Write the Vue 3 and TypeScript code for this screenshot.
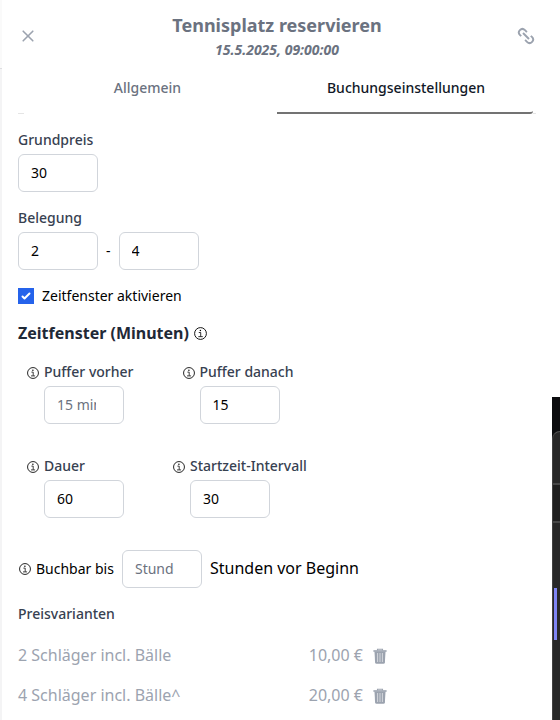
<script setup lang="ts">
import { ref } from 'vue'

interface Variant {
  name: string
  price: string
}

const basePrice = ref<number | string>(30)
const minPlayers = ref<number | string>(2)
const maxPlayers = ref<number | string>(4)
const slotsEnabled = ref(true)
const bufferBefore = ref<number | string>('')
const bufferAfter = ref<number | string>(15)
const duration = ref<number | string>(60)
const interval = ref<number | string>(30)
const bookableUntil = ref<number | string>('')

const variants = ref<Variant[]>([
  { name: '2 Schläger incl. Bälle', price: '10,00 €' },
  { name: '4 Schläger incl. Bälle^', price: '20,00 €' },
])

function removeVariant(index: number) {
  variants.value.splice(index, 1)
}
</script>

<template>
  <div class="screen">
    <svg width="0" height="0" class="sprites">
      <symbol id="info" viewBox="0 0 12 12">
        <circle cx="6" cy="6" r="5.45" fill="none" stroke="currentColor" stroke-width="0.85" />
        <circle cx="5.9" cy="3.3" r="0.7" fill="currentColor" />
        <path d="M4.4 5.1H6.2V8.7M4 8.9H8.1" fill="none" stroke="currentColor" stroke-width="0.75" />
      </symbol>
      <symbol id="trash" viewBox="0 0 14 16">
        <path d="M4.5 2.6V1.2H9.5V2.6" fill="none" stroke="currentColor" stroke-width="1.1" />
        <path d="M0.4 2.2H13.6V3.8H0.4Z" fill="currentColor" />
        <path d="M1.5 3.6H12.5L11.9 14.6Q11.8 15.8 10.6 15.8H3.4Q2.2 15.8 2.1 14.6Z" fill="currentColor" />
        <path d="M4.6 5V14M7 5V14M9.4 5V14" stroke="#fff" stroke-opacity="0.6" stroke-width="0.95" />
      </symbol>
    </svg>

    <div class="edge"><div class="edge-top"></div></div>

    <main class="panel">
      <header class="header">
        <button class="icon-btn" aria-label="Schließen">
          <svg width="20" height="20" viewBox="0 0 20 20">
            <path d="M5.2 5.2L14.8 14.8M14.8 5.2L5.2 14.8" fill="none" stroke="currentColor" stroke-width="1.6" stroke-linecap="round" />
          </svg>
        </button>
        <div class="titles">
          <h1>Tennisplatz reservieren</h1>
          <p>15.5.2025, 09:00:00</p>
        </div>
        <button class="icon-btn" aria-label="Link">
          <svg width="20" height="20" viewBox="0 0 20 20" fill="none" stroke="currentColor" stroke-width="1.9">
            <path d="M5.2 10.2L4.1 9.1C2.5 7.5 2.5 5.5 3.9 4.1C5.4 2.6 7.5 2.7 9 4.2L10.9 6.1" />
            <path d="M7 7L13 13" />
            <path d="M9.1 13.9L11 15.8C12.5 17.3 14.6 17.4 16.1 15.9C17.5 14.5 17.5 12.5 15.9 10.9L14.8 9.8" />
          </svg>
        </button>
      </header>

      <nav class="tabs">
        <button class="tab">Allgemein</button>
        <button class="tab active">Buchungseinstellungen</button>
      </nav>
      <div class="tab-ends"><i></i><i></i></div>

      <form class="form" @submit.prevent>
        <div class="field">
          <label>Grundpreis</label>
          <input v-model="basePrice" type="number" />
        </div>
        <div class="field occupancy">
          <label>Belegung</label>
          <div class="range">
            <input v-model="minPlayers" type="number" />
            <span>-</span>
            <input v-model="maxPlayers" type="number" />
          </div>
        </div>

        <label class="check">
          <input v-model="slotsEnabled" type="checkbox" />
          <span class="box">
            <svg v-if="slotsEnabled" width="16" height="16" viewBox="0 0 16 16">
              <path d="M12.207 4.793a1 1 0 0 1 0 1.414l-5 5a1 1 0 0 1-1.414 0l-2-2a1 1 0 0 1 1.414-1.414L6.5 9.086l4.293-4.293a1 1 0 0 1 1.414 0z" fill="#fff" />
            </svg>
          </span>
          Zeitfenster aktivieren
        </label>

        <h2>Zeitfenster (Minuten) <svg class="info-lg"><use href="#info" /></svg></h2>

        <div class="pair buffers">
          <div class="cell">
            <svg class="info"><use href="#info" /></svg>
            <div class="field">
              <label>Puffer vorher</label>
              <input v-model="bufferBefore" type="number" placeholder="15 min" />
            </div>
          </div>
          <div class="cell">
            <svg class="info"><use href="#info" /></svg>
            <div class="field">
              <label>Puffer danach</label>
              <input v-model="bufferAfter" type="number" />
            </div>
          </div>
        </div>

        <div class="pair timing">
          <div class="cell">
            <svg class="info"><use href="#info" /></svg>
            <div class="field">
              <label>Dauer</label>
              <input v-model="duration" type="number" />
            </div>
          </div>
          <div class="cell">
            <svg class="info"><use href="#info" /></svg>
            <div class="field">
              <label>Startzeit-Intervall</label>
              <input v-model="interval" type="number" />
            </div>
          </div>
        </div>

        <div class="until">
          <svg class="info"><use href="#info" /></svg>
          <span class="until-label">Buchbar bis</span>
          <input v-model="bookableUntil" type="number" placeholder="Stunden" />
          <span class="until-suffix">Stunden vor Beginn</span>
        </div>

        <h3>Preisvarianten</h3>
        <ul class="variants">
          <li v-for="(variant, i) in variants" :key="variant.name">
            <span>{{ variant.name }}</span>
            <span class="price">{{ variant.price }}</span>
            <button aria-label="Entfernen" @click="removeVariant(i)">
              <svg width="14" height="16"><use href="#trash" /></svg>
            </button>
          </li>
        </ul>
      </form>
    </main>

    <aside class="backdrop">
      <div class="dark-window">
        <div class="window-bar"></div>
        <div class="window-row"></div>
        <div class="window-body"><div class="marker"></div></div>
      </div>
    </aside>
  </div>
</template>

<style>
body {
  margin: 0;
  background: #fff;
}
</style>

<style scoped>
* {
  box-sizing: border-box;
}
.screen {
  display: flex;
  width: 560px;
  height: 720px;
  overflow: hidden;
  background: #fff;
  color: #000;
  font-family: "Noto Sans", sans-serif;
  font-size: 14px;
  line-height: 20px;
}
.sprites {
  position: absolute;
}
.edge {
  width: 2px;
  background: #f4f4f5;
}
.edge-top {
  height: 69px;
  border-bottom: 1px solid #dedee1;
  background: #fafafa;
}
.panel {
  width: 550px;
  padding: 0 16px;
}
button {
  padding: 0;
  border: 0;
  background: none;
  color: inherit;
  font: inherit;
}
svg {
  display: block;
}
h1, h2, h3, p, ul {
  margin: 0;
}
.header {
  display: flex;
  align-items: center;
  justify-content: space-between;
  height: 68px;
  padding-top: 4px;
  color: #9ca3af;
}
.icon-btn {
  width: 20px;
  height: 20px;
}
.titles {
  color: #6b7280;
  text-align: center;
}
h1 {
  height: 28px;
  font-size: 18px;
  font-weight: 700;
  line-height: 26px;
}
.titles p {
  font-weight: 700;
  font-style: italic;
  line-height: 20px;
}
.tabs {
  display: grid;
  grid-template-columns: 259px 256px;
  height: 46px;
}
.tab {
  padding-bottom: 7px;
  color: #6b7280;
  font-weight: 500;
}
.tab.active {
  border-bottom: 2px solid #737373;
  padding-bottom: 5px;
  padding-left: 2px;
  border-bottom-right-radius: 3px;
  color: #111827;
}
.tab-ends {
  display: flex;
  justify-content: space-between;
  width: 518px;
  height: 1px;
  margin-top: -1px;
}
.tab-ends i {
  width: 6px;
  background: #e5e5e5;
}
.tab-ends i:last-child {
  width: 3px;
}
.form {
  padding-top: 16px;
}
.field {
  display: flex;
  flex-direction: column;
  align-items: flex-start;
  gap: 4px;
}
.field label, h3 {
  color: #374151;
  font-size: 14px;
  font-weight: 500;
}
input[type="number"] {
  width: 80px;
  height: 38px;
  margin: 0;
  padding: 7px 12px 9px;
  border: 1px solid #d1d5db;
  border-radius: 6px;
  background: #fff;
  color: #000;
  font: inherit;
  outline: none;
}
input::placeholder {
  color: #6b7280;
  opacity: 1;
}
.occupancy {
  margin-top: 16px;
}
.range {
  display: flex;
  align-items: center;
  gap: 8px;
}
.check {
  display: flex;
  align-items: center;
  gap: 8px;
  margin-top: 16px;
}
.check input {
  display: none;
}
.box {
  width: 16px;
  height: 16px;
  background: #2563eb;
}
h2 {
  display: flex;
  align-items: center;
  gap: 5px;
  margin-top: 15px;
  color: #1f2937;
  font-size: 16px;
  font-weight: 700;
  line-height: 24px;
}
.info-lg {
  width: 13px;
  height: 13px;
  margin-top: 1px;
  color: #000;
}
.info {
  flex: none;
  width: 12px;
  height: 12px;
}
.pair {
  display: flex;
  padding-left: 9px;
}
.cell {
  display: flex;
  gap: 5px;
}
.cell .info {
  margin-top: 5px;
}
.buffers {
  gap: 49px;
  margin-top: 17px;
}
.timing {
  gap: 49px;
  margin-top: 32px;
}
.until {
  display: flex;
  align-items: center;
  margin-top: 32px;
  padding-left: 1px;
}
.until-label {
  margin: 0 8px 0 5px;
}
.until-suffix {
  margin-left: 8px;
  padding-bottom: 2px;
  font-size: 16px;
  line-height: 24px;
}
h3 {
  margin-top: 16px;
}
.variants {
  padding: 0;
  margin-top: 11px;
  list-style: none;
  color: #9ca3af;
  font-size: 16px;
  line-height: 24px;
}
.variants li {
  display: grid;
  grid-template-columns: 245px 100px 24px;
  align-items: center;
  height: 40px;
}
.price {
  text-align: right;
}
.variants button {
  width: 14px;
  margin: 1px 0 0 10px;
}
.backdrop {
  width: 8px;
  margin-top: 397px;
  padding-top: 34px;
  background: #0c0d0f;
}
.dark-window {
  display: flex;
  flex-direction: column;
  width: 20px;
  height: 289px;
  border-left: 1px solid #424242;
  border-top: 1px solid #555;
  border-top-left-radius: 8px;
  background: #282828;
}
.window-bar {
  height: 53px;
  border-bottom: 2px solid #484848;
}
.window-row {
  height: 38px;
  border-bottom: 2px solid #484848;
  background: #202020;
}
.window-body {
  padding: 65px 0 0 1px;
}
.marker {
  width: 3px;
  height: 52px;
  background: #7f85f5;
}
</style>
